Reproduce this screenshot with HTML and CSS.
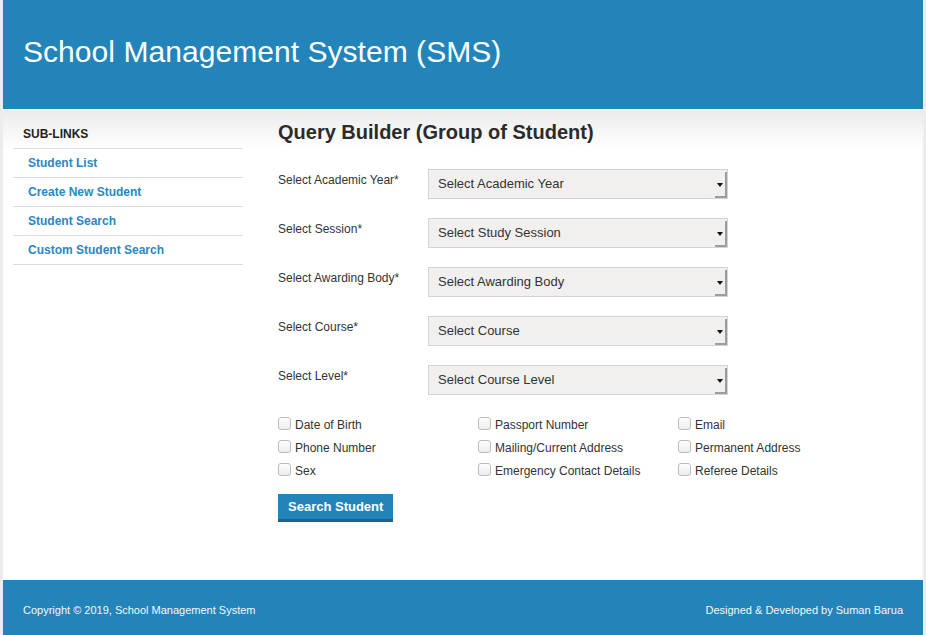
FILE: index.html
```html
<!DOCTYPE html>
<html>
<head>
<meta charset="utf-8">
<title>School Management System (SMS)</title>
<link rel="stylesheet" href="styles.css">
</head>
<body>
<div class="page">
  <header class="top">
    <h1 class="brand">School Management System (SMS)</h1>
  </header>
  <div class="content">
    <aside class="sidebar">
      <div class="side-title">SUB-LINKS</div>
      <ul class="side-links">
        <li><a href="#">Student List</a></li>
        <li><a href="#">Create New Student</a></li>
        <li><a href="#">Student Search</a></li>
        <li><a href="#">Custom Student Search</a></li>
      </ul>
    </aside>
    <main class="main">
      <h2 class="heading">Query Builder (Group of Student)</h2>
      <form class="form">
        <div class="row">
          <label class="lbl">Select Academic Year*</label>
          <div class="sel"><span class="sel-text">Select Academic Year</span><span class="sel-btn"><span class="tri"></span></span></div>
        </div>
        <div class="row">
          <label class="lbl">Select Session*</label>
          <div class="sel"><span class="sel-text">Select Study Session</span><span class="sel-btn"><span class="tri"></span></span></div>
        </div>
        <div class="row">
          <label class="lbl">Select Awarding Body*</label>
          <div class="sel"><span class="sel-text">Select Awarding Body</span><span class="sel-btn"><span class="tri"></span></span></div>
        </div>
        <div class="row">
          <label class="lbl">Select Course*</label>
          <div class="sel"><span class="sel-text">Select Course</span><span class="sel-btn"><span class="tri"></span></span></div>
        </div>
        <div class="row">
          <label class="lbl">Select Level*</label>
          <div class="sel"><span class="sel-text">Select Course Level</span><span class="sel-btn"><span class="tri"></span></span></div>
        </div>
        <div class="checks">
          <label class="chk"><input type="checkbox"><span>Date of Birth</span></label>
          <label class="chk"><input type="checkbox"><span>Passport Number</span></label>
          <label class="chk"><input type="checkbox"><span>Email</span></label>
          <label class="chk"><input type="checkbox"><span>Phone Number</span></label>
          <label class="chk"><input type="checkbox"><span>Mailing/Current Address</span></label>
          <label class="chk"><input type="checkbox"><span>Permanent Address</span></label>
          <label class="chk"><input type="checkbox"><span>Sex</span></label>
          <label class="chk"><input type="checkbox"><span>Emergency Contact Details</span></label>
          <label class="chk"><input type="checkbox"><span>Referee Details</span></label>
        </div>
        <button type="button" class="btn">Search Student</button>
      </form>
    </main>
  </div>
  <footer class="foot">
    <span>Copyright © 2019, School Management System</span>
    <span>Designed &amp; Developed by <a href="#">Suman Barua</a></span>
  </footer>
</div>
</body>
</html>
```

FILE: styles.css
```css
* { box-sizing: border-box; }
html, body { margin: 0; padding: 0; }
body {
  background: #ececec;
  font-family: "Liberation Sans", Arial, sans-serif;
  color: #333;
}
.page {
  width: 920px;
  margin: 0 auto;
  background: #fff;
  min-height: 635px;
  display: flex;
  flex-direction: column;
}
.top {
  background: #2384b9;
  height: 109px;
  padding: 0 20px 5px;
  display: flex;
  align-items: center;
}
.brand {
  margin: 0;
  font-weight: normal;
  font-size: 30px;
  color: #fff;
  letter-spacing: 0.05px;
}
.content {
  flex: 1;
  display: flex;
  border-top: 1px solid #fff;
  background: linear-gradient(#ebebeb 0, #ffffff 40px, #ffffff 100%);
  padding: 10px 0 0 10px;
}
.sidebar {
  width: 230px;
  flex: none;
}
.side-title {
  font-size: 12px;
  font-weight: bold;
  color: #222;
  height: 28px;
  line-height: 28px;
  padding-left: 10px;
  border-bottom: 1px solid #ddd;
  box-sizing: content-box;
}
.side-links {
  list-style: none;
  margin: 0;
  padding: 0;
}
.side-links li {
  border-bottom: 1px solid #ddd;
  height: 29px;
  font-size: 12px;
  line-height: 28px;
  padding-left: 15px;
}
.side-links a {
  font-size: 12px;
  font-weight: bold;
  color: #2a88c2;
  text-decoration: none;
}
.main {
  margin-left: 35px;
  flex: 1;
}
.heading {
  margin: 0 0 25px;
  font-size: 20px;
  line-height: 24px;
  color: #2b2b2b;
  font-weight: bold;
}
.row {
  display: flex;
  align-items: flex-start;
  margin-bottom: 19px;
}
.lbl {
  width: 150px;
  font-size: 12px;
  line-height: 18px;
  padding-top: 2px;
  color: #333;
}
.sel {
  position: relative;
  width: 300px;
  height: 30px;
  background: #f1f0ee;
  border: 1px solid #d4d4d4;
  display: flex;
  align-items: center;
  padding-left: 9px;
  font-size: 13px;
  color: #333;
}
.sel-text { flex: 1; padding-bottom: 1px; }
.sel-btn {
  position: absolute;
  right: 0;
  top: 2px;
  bottom: 0;
  width: 12px;
  border-right: 2px solid #9d9d9d;
  border-bottom: 2px solid #9d9d9d;
  display: flex;
  align-items: center;
  justify-content: center;
}
.tri {
  width: 0;
  height: 0;
  border-left: 3px solid transparent;
  border-right: 3px solid transparent;
  border-top: 4px solid #111;
  margin-top: 2px;
}
.checks {
  display: grid;
  grid-template-columns: 200px 200px 200px;
  row-gap: 5px;
  padding-top: 2px;
  margin-bottom: 14px;
}
.chk {
  display: flex;
  align-items: center;
  height: 18px;
  font-size: 12px;
  color: #333;
}
.chk input {
  -webkit-appearance: none;
  appearance: none;
  margin: 0 4px 0 0;
  width: 13px;
  height: 13px;
  border: 1px solid #bdbdbd;
  border-radius: 3px;
  background: linear-gradient(#fdfdfd, #ededed);
  position: relative;
  top: -2px;
  flex: none;
}
.btn {
  background: #2384b9;
  color: #fff;
  border: 0;
  border-bottom: 3px solid #1a6490;
  font-family: "Liberation Sans", Arial, sans-serif;
  font-weight: bold;
  font-size: 13px;
  height: 28px;
  padding: 0 10px;
  cursor: pointer;
}
.foot {
  background: #2384b9;
  height: 55px;
  padding: 4px 20px 0;
  display: flex;
  justify-content: space-between;
  align-items: center;
  font-size: 11px;
  color: #f4f8fb;
}
.foot a { color: #f4f8fb; text-decoration: none; }
```
